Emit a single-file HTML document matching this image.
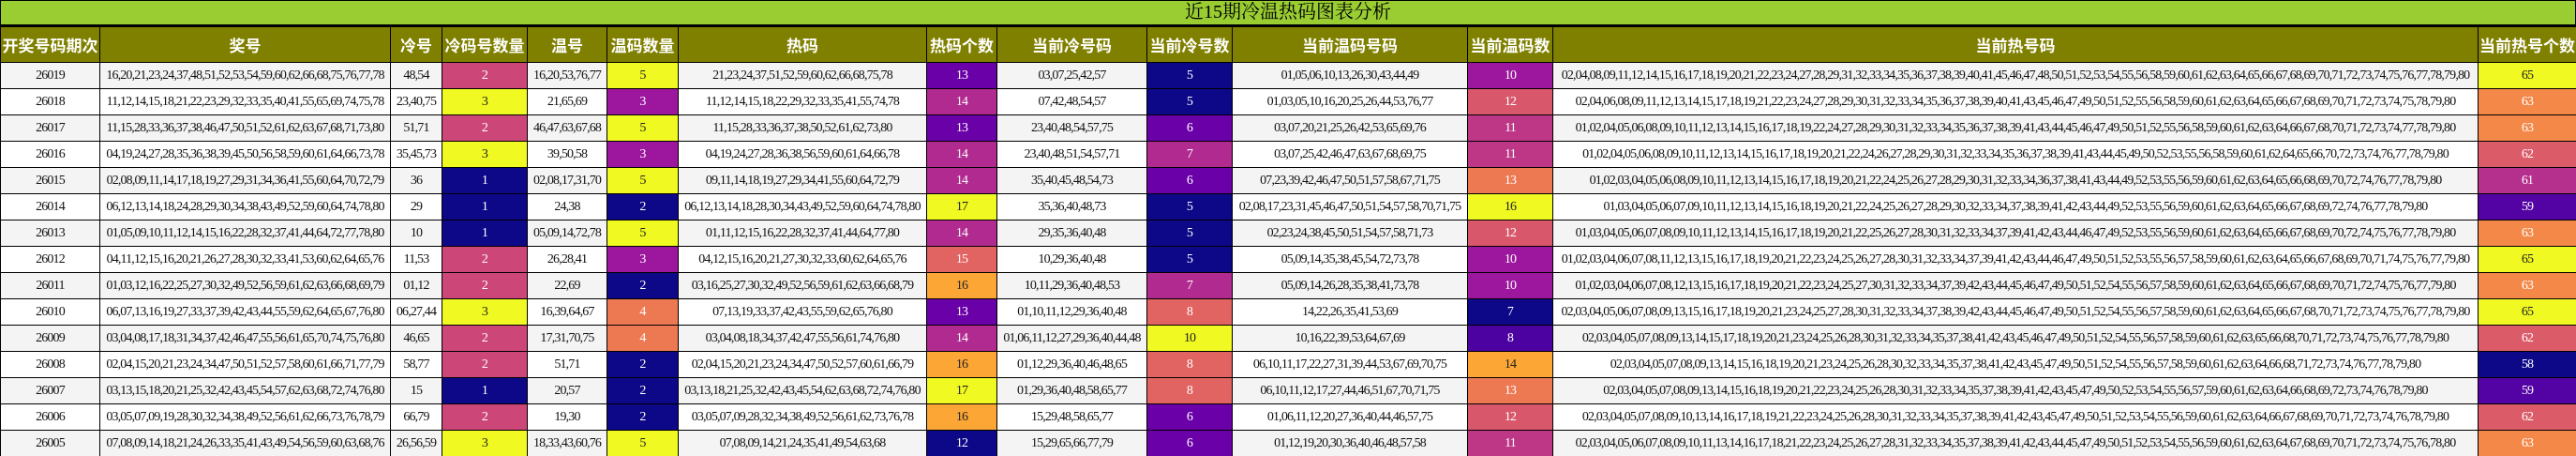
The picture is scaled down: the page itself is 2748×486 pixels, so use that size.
<!DOCTYPE html>
<html><head><meta charset="utf-8">
<style>
html,body{margin:0;padding:0;background:#fff;width:2748px;height:486px;overflow:hidden}
.title{box-sizing:border-box;height:28px;width:2748px;background:#9acd32;border:1px solid #000;border-bottom:2px solid #000;text-align:center;font:20px/25px "Liberation Serif","Noto Serif CJK SC","Noto Sans CJK SC",serif;color:#000}
table{border-collapse:collapse;table-layout:fixed;width:2748px}
th{background:#808000;color:#fff;font:bold 17px "Liberation Sans","Noto Sans CJK SC",sans-serif;height:37px;border:1px solid #000;padding:0;white-space:nowrap;overflow:hidden}
td{font:14px "Liberation Serif","Noto Serif CJK SC",serif;letter-spacing:-0.85px;color:#111;height:27px;border:1px solid #000;padding:0;text-align:center;white-space:nowrap;overflow:hidden}
tr:nth-child(odd) td{background:#f4f4f4}
tr:nth-child(even) td{background:#fff}
td.c{color:#fff}
td.k{color:#222}
</style></head><body>
<div class="title">近15期冷温热码图表分析</div>
<table>
<colgroup><col style="width:106px"><col style="width:310px"><col style="width:55px"><col style="width:91px"><col style="width:85px"><col style="width:76px"><col style="width:265px"><col style="width:75px"><col style="width:160px"><col style="width:91px"><col style="width:251px"><col style="width:91px"><col style="width:987px"><col style="width:105px"></colgroup>
<thead><tr><th>开奖号码期次</th><th>奖号</th><th>冷号</th><th>冷码号数量</th><th>温号</th><th>温码数量</th><th>热码</th><th>热码个数</th><th>当前冷号码</th><th>当前冷号数</th><th>当前温码号码</th><th>当前温码数</th><th>当前热号码</th><th>当前热号个数</th></tr></thead>
<tbody>
<tr><td>26019</td><td>16,20,21,23,24,37,48,51,52,53,54,59,60,62,66,68,75,76,77,78</td><td>48,54</td><td class="c" style="background:#cc4778">2</td><td>16,20,53,76,77</td><td class="k" style="background:#f0f921">5</td><td>21,23,24,37,51,52,59,60,62,66,68,75,78</td><td class="c" style="background:#6a00a8">13</td><td>03,07,25,42,57</td><td class="c" style="background:#0d0887">5</td><td>01,05,06,10,13,26,30,43,44,49</td><td class="c" style="background:#9c179e">10</td><td>02,04,08,09,11,12,14,15,16,17,18,19,20,21,22,23,24,27,28,29,31,32,33,34,35,36,37,38,39,40,41,45,46,47,48,50,51,52,53,54,55,56,58,59,60,61,62,63,64,65,66,67,68,69,70,71,72,73,74,75,76,77,78,79,80</td><td class="k" style="background:#f0f921">65</td></tr>
<tr><td>26018</td><td>11,12,14,15,18,21,22,23,29,32,33,35,40,41,55,65,69,74,75,78</td><td>23,40,75</td><td class="k" style="background:#f0f921">3</td><td>21,65,69</td><td class="c" style="background:#9c179e">3</td><td>11,12,14,15,18,22,29,32,33,35,41,55,74,78</td><td class="c" style="background:#b12a90">14</td><td>07,42,48,54,57</td><td class="c" style="background:#0d0887">5</td><td>01,03,05,10,16,20,25,26,44,53,76,77</td><td class="c" style="background:#d8576b">12</td><td>02,04,06,08,09,11,12,13,14,15,17,18,19,21,22,23,24,27,28,29,30,31,32,33,34,35,36,37,38,39,40,41,43,45,46,47,49,50,51,52,55,56,58,59,60,61,62,63,64,65,66,67,68,69,70,71,72,73,74,75,78,79,80</td><td class="c" style="background:#f48849">63</td></tr>
<tr><td>26017</td><td>11,15,28,33,36,37,38,46,47,50,51,52,61,62,63,67,68,71,73,80</td><td>51,71</td><td class="c" style="background:#cc4778">2</td><td>46,47,63,67,68</td><td class="k" style="background:#f0f921">5</td><td>11,15,28,33,36,37,38,50,52,61,62,73,80</td><td class="c" style="background:#6a00a8">13</td><td>23,40,48,54,57,75</td><td class="c" style="background:#6a00a8">6</td><td>03,07,20,21,25,26,42,53,65,69,76</td><td class="c" style="background:#bd3786">11</td><td>01,02,04,05,06,08,09,10,11,12,13,14,15,16,17,18,19,22,24,27,28,29,30,31,32,33,34,35,36,37,38,39,41,43,44,45,46,47,49,50,51,52,55,56,58,59,60,61,62,63,64,66,67,68,70,71,72,73,74,77,78,79,80</td><td class="c" style="background:#f48849">63</td></tr>
<tr><td>26016</td><td>04,19,24,27,28,35,36,38,39,45,50,56,58,59,60,61,64,66,73,78</td><td>35,45,73</td><td class="k" style="background:#f0f921">3</td><td>39,50,58</td><td class="c" style="background:#9c179e">3</td><td>04,19,24,27,28,36,38,56,59,60,61,64,66,78</td><td class="c" style="background:#b12a90">14</td><td>23,40,48,51,54,57,71</td><td class="c" style="background:#b12a90">7</td><td>03,07,25,42,46,47,63,67,68,69,75</td><td class="c" style="background:#bd3786">11</td><td>01,02,04,05,06,08,09,10,11,12,13,14,15,16,17,18,19,20,21,22,24,26,27,28,29,30,31,32,33,34,35,36,37,38,39,41,43,44,45,49,50,52,53,55,56,58,59,60,61,62,64,65,66,70,72,73,74,76,77,78,79,80</td><td class="c" style="background:#db5c68">62</td></tr>
<tr><td>26015</td><td>02,08,09,11,14,17,18,19,27,29,31,34,36,41,55,60,64,70,72,79</td><td>36</td><td class="c" style="background:#0d0887">1</td><td>02,08,17,31,70</td><td class="k" style="background:#f0f921">5</td><td>09,11,14,18,19,27,29,34,41,55,60,64,72,79</td><td class="c" style="background:#b12a90">14</td><td>35,40,45,48,54,73</td><td class="c" style="background:#6a00a8">6</td><td>07,23,39,42,46,47,50,51,57,58,67,71,75</td><td class="c" style="background:#ed7953">13</td><td>01,02,03,04,05,06,08,09,10,11,12,13,14,15,16,17,18,19,20,21,22,24,25,26,27,28,29,30,31,32,33,34,36,37,38,41,43,44,49,52,53,55,56,59,60,61,62,63,64,65,66,68,69,70,72,74,76,77,78,79,80</td><td class="c" style="background:#b52f8c">61</td></tr>
<tr><td>26014</td><td>06,12,13,14,18,24,28,29,30,34,38,43,49,52,59,60,64,74,78,80</td><td>29</td><td class="c" style="background:#0d0887">1</td><td>24,38</td><td class="c" style="background:#0d0887">2</td><td>06,12,13,14,18,28,30,34,43,49,52,59,60,64,74,78,80</td><td class="k" style="background:#f0f921">17</td><td>35,36,40,48,73</td><td class="c" style="background:#0d0887">5</td><td>02,08,17,23,31,45,46,47,50,51,54,57,58,70,71,75</td><td class="k" style="background:#f0f921">16</td><td>01,03,04,05,06,07,09,10,11,12,13,14,15,16,18,19,20,21,22,24,25,26,27,28,29,30,32,33,34,37,38,39,41,42,43,44,49,52,53,55,56,59,60,61,62,63,64,65,66,67,68,69,72,74,76,77,78,79,80</td><td class="c" style="background:#5302a3">59</td></tr>
<tr><td>26013</td><td>01,05,09,10,11,12,14,15,16,22,28,32,37,41,44,64,72,77,78,80</td><td>10</td><td class="c" style="background:#0d0887">1</td><td>05,09,14,72,78</td><td class="k" style="background:#f0f921">5</td><td>01,11,12,15,16,22,28,32,37,41,44,64,77,80</td><td class="c" style="background:#b12a90">14</td><td>29,35,36,40,48</td><td class="c" style="background:#0d0887">5</td><td>02,23,24,38,45,50,51,54,57,58,71,73</td><td class="c" style="background:#d8576b">12</td><td>01,03,04,05,06,07,08,09,10,11,12,13,14,15,16,17,18,19,20,21,22,25,26,27,28,30,31,32,33,34,37,39,41,42,43,44,46,47,49,52,53,55,56,59,60,61,62,63,64,65,66,67,68,69,70,72,74,75,76,77,78,79,80</td><td class="c" style="background:#f48849">63</td></tr>
<tr><td>26012</td><td>04,11,12,15,16,20,21,26,27,28,30,32,33,41,53,60,62,64,65,76</td><td>11,53</td><td class="c" style="background:#cc4778">2</td><td>26,28,41</td><td class="c" style="background:#9c179e">3</td><td>04,12,15,16,20,21,27,30,32,33,60,62,64,65,76</td><td class="c" style="background:#e16462">15</td><td>10,29,36,40,48</td><td class="c" style="background:#0d0887">5</td><td>05,09,14,35,38,45,54,72,73,78</td><td class="c" style="background:#9c179e">10</td><td>01,02,03,04,06,07,08,11,12,13,15,16,17,18,19,20,21,22,23,24,25,26,27,28,30,31,32,33,34,37,39,41,42,43,44,46,47,49,50,51,52,53,55,56,57,58,59,60,61,62,63,64,65,66,67,68,69,70,71,74,75,76,77,79,80</td><td class="k" style="background:#f0f921">65</td></tr>
<tr><td>26011</td><td>01,03,12,16,22,25,27,30,32,49,52,56,59,61,62,63,66,68,69,79</td><td>01,12</td><td class="c" style="background:#cc4778">2</td><td>22,69</td><td class="c" style="background:#0d0887">2</td><td>03,16,25,27,30,32,49,52,56,59,61,62,63,66,68,79</td><td class="k" style="background:#fca636">16</td><td>10,11,29,36,40,48,53</td><td class="c" style="background:#b12a90">7</td><td>05,09,14,26,28,35,38,41,73,78</td><td class="c" style="background:#9c179e">10</td><td>01,02,03,04,06,07,08,12,13,15,16,17,18,19,20,21,22,23,24,25,27,30,31,32,33,34,37,39,42,43,44,45,46,47,49,50,51,52,54,55,56,57,58,59,60,61,62,63,64,65,66,67,68,69,70,71,72,74,75,76,77,79,80</td><td class="c" style="background:#f48849">63</td></tr>
<tr><td>26010</td><td>06,07,13,16,19,27,33,37,39,42,43,44,55,59,62,64,65,67,76,80</td><td>06,27,44</td><td class="k" style="background:#f0f921">3</td><td>16,39,64,67</td><td class="c" style="background:#ed7953">4</td><td>07,13,19,33,37,42,43,55,59,62,65,76,80</td><td class="c" style="background:#6a00a8">13</td><td>01,10,11,12,29,36,40,48</td><td class="c" style="background:#e16462">8</td><td>14,22,26,35,41,53,69</td><td class="c" style="background:#0d0887">7</td><td>02,03,04,05,06,07,08,09,13,15,16,17,18,19,20,21,23,24,25,27,28,30,31,32,33,34,37,38,39,42,43,44,45,46,47,49,50,51,52,54,55,56,57,58,59,60,61,62,63,64,65,66,67,68,70,71,72,73,74,75,76,77,78,79,80</td><td class="k" style="background:#f0f921">65</td></tr>
<tr><td>26009</td><td>03,04,08,17,18,31,34,37,42,46,47,55,56,61,65,70,74,75,76,80</td><td>46,65</td><td class="c" style="background:#cc4778">2</td><td>17,31,70,75</td><td class="c" style="background:#ed7953">4</td><td>03,04,08,18,34,37,42,47,55,56,61,74,76,80</td><td class="c" style="background:#b12a90">14</td><td>01,06,11,12,27,29,36,40,44,48</td><td class="k" style="background:#f0f921">10</td><td>10,16,22,39,53,64,67,69</td><td class="c" style="background:#4c02a1">8</td><td>02,03,04,05,07,08,09,13,14,15,17,18,19,20,21,23,24,25,26,28,30,31,32,33,34,35,37,38,41,42,43,45,46,47,49,50,51,52,54,55,56,57,58,59,60,61,62,63,65,66,68,70,71,72,73,74,75,76,77,78,79,80</td><td class="c" style="background:#db5c68">62</td></tr>
<tr><td>26008</td><td>02,04,15,20,21,23,24,34,47,50,51,52,57,58,60,61,66,71,77,79</td><td>58,77</td><td class="c" style="background:#cc4778">2</td><td>51,71</td><td class="c" style="background:#0d0887">2</td><td>02,04,15,20,21,23,24,34,47,50,52,57,60,61,66,79</td><td class="k" style="background:#fca636">16</td><td>01,12,29,36,40,46,48,65</td><td class="c" style="background:#e16462">8</td><td>06,10,11,17,22,27,31,39,44,53,67,69,70,75</td><td class="k" style="background:#fca636">14</td><td>02,03,04,05,07,08,09,13,14,15,16,18,19,20,21,23,24,25,26,28,30,32,33,34,35,37,38,41,42,43,45,47,49,50,51,52,54,55,56,57,58,59,60,61,62,63,64,66,68,71,72,73,74,76,77,78,79,80</td><td class="c" style="background:#0d0887">58</td></tr>
<tr><td>26007</td><td>03,13,15,18,20,21,25,32,42,43,45,54,57,62,63,68,72,74,76,80</td><td>15</td><td class="c" style="background:#0d0887">1</td><td>20,57</td><td class="c" style="background:#0d0887">2</td><td>03,13,18,21,25,32,42,43,45,54,62,63,68,72,74,76,80</td><td class="k" style="background:#f0f921">17</td><td>01,29,36,40,48,58,65,77</td><td class="c" style="background:#e16462">8</td><td>06,10,11,12,17,27,44,46,51,67,70,71,75</td><td class="c" style="background:#ed7953">13</td><td>02,03,04,05,07,08,09,13,14,15,16,18,19,20,21,22,23,24,25,26,28,30,31,32,33,34,35,37,38,39,41,42,43,45,47,49,50,52,53,54,55,56,57,59,60,61,62,63,64,66,68,69,72,73,74,76,78,79,80</td><td class="c" style="background:#5302a3">59</td></tr>
<tr><td>26006</td><td>03,05,07,09,19,28,30,32,34,38,49,52,56,61,62,66,73,76,78,79</td><td>66,79</td><td class="c" style="background:#cc4778">2</td><td>19,30</td><td class="c" style="background:#0d0887">2</td><td>03,05,07,09,28,32,34,38,49,52,56,61,62,73,76,78</td><td class="k" style="background:#fca636">16</td><td>15,29,48,58,65,77</td><td class="c" style="background:#6a00a8">6</td><td>01,06,11,12,20,27,36,40,44,46,57,75</td><td class="c" style="background:#d8576b">12</td><td>02,03,04,05,07,08,09,10,13,14,16,17,18,19,21,22,23,24,25,26,28,30,31,32,33,34,35,37,38,39,41,42,43,45,47,49,50,51,52,53,54,55,56,59,60,61,62,63,64,66,67,68,69,70,71,72,73,74,76,78,79,80</td><td class="c" style="background:#db5c68">62</td></tr>
<tr><td>26005</td><td>07,08,09,14,18,21,24,26,33,35,41,43,49,54,56,59,60,63,68,76</td><td>26,56,59</td><td class="k" style="background:#f0f921">3</td><td>18,33,43,60,76</td><td class="k" style="background:#f0f921">5</td><td>07,08,09,14,21,24,35,41,49,54,63,68</td><td class="c" style="background:#0d0887">12</td><td>15,29,65,66,77,79</td><td class="c" style="background:#6a00a8">6</td><td>01,12,19,20,30,36,40,46,48,57,58</td><td class="c" style="background:#bd3786">11</td><td>02,03,04,05,06,07,08,09,10,11,13,14,16,17,18,21,22,23,24,25,26,27,28,31,32,33,34,35,37,38,39,41,42,43,44,45,47,49,50,51,52,53,54,55,56,59,60,61,62,63,64,67,68,69,70,71,72,73,74,75,76,78,80</td><td class="c" style="background:#f48849">63</td></tr>
</tbody></table>
</body></html>
